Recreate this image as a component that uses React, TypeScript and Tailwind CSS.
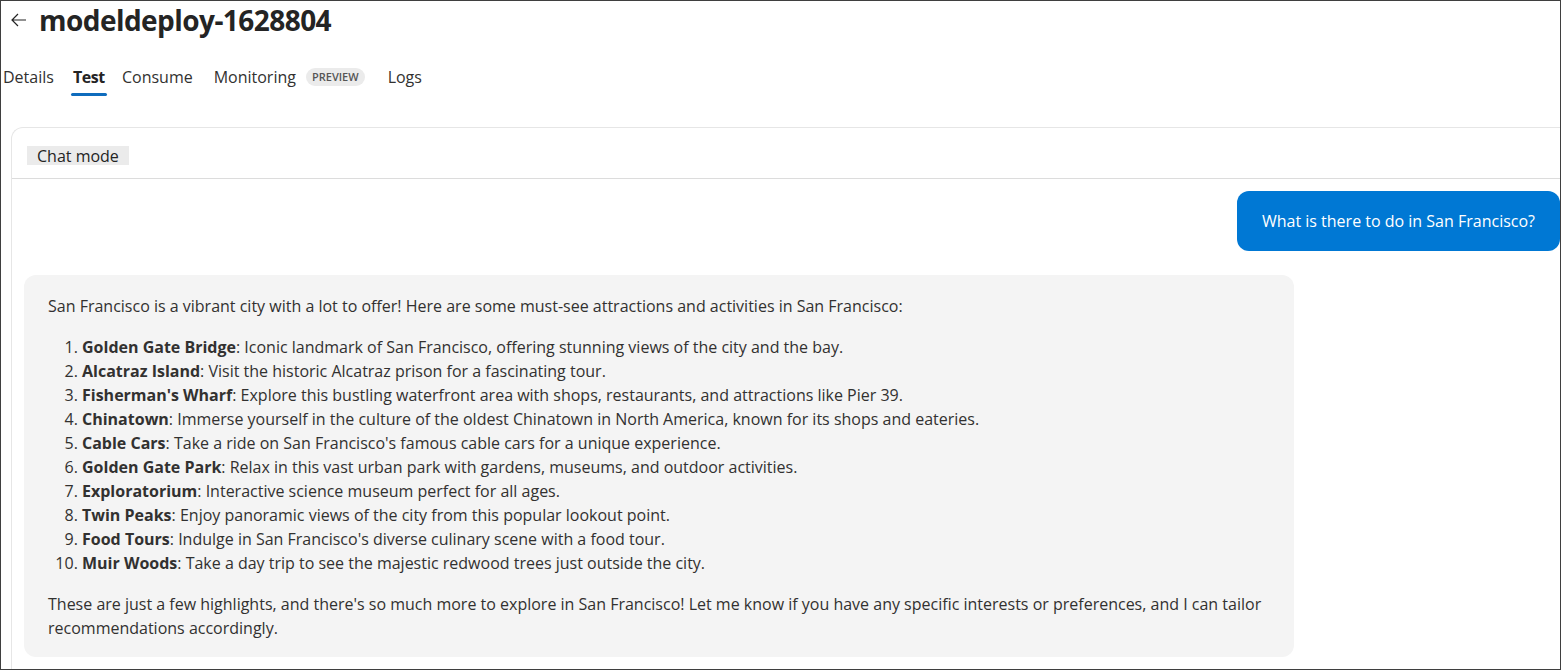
import React from "react";

const items: [string, string][] = [
  ["Golden Gate Bridge", "Iconic landmark of San Francisco, offering stunning views of the city and the bay."],
  ["Alcatraz Island", "Visit the historic Alcatraz prison for a fascinating tour."],
  ["Fisherman's Wharf", "Explore this bustling waterfront area with shops, restaurants, and attractions like Pier 39."],
  ["Chinatown", "Immerse yourself in the culture of the oldest Chinatown in North America, known for its shops and eateries."],
  ["Cable Cars", "Take a ride on San Francisco's famous cable cars for a unique experience."],
  ["Golden Gate Park", "Relax in this vast urban park with gardens, museums, and outdoor activities."],
  ["Exploratorium", "Interactive science museum perfect for all ages."],
  ["Twin Peaks", "Enjoy panoramic views of the city from this popular lookout point."],
  ["Food Tours", "Indulge in San Francisco's diverse culinary scene with a food tour."],
  ["Muir Woods", "Take a day trip to see the majestic redwood trees just outside the city."],
];

export default function App() {
  return (
    <div
      className="w-[1561px] h-[670px] border border-[#3f3f3f] bg-white overflow-hidden text-[#242424]"
      style={{ fontFamily: '"Open Sans", "Noto Sans", sans-serif' }}
    >
      <div className="flex items-center h-[38px] pl-[8px] gap-[10px]">
        <svg width="20" height="20" viewBox="0 0 20 20" fill="none" stroke="#242424" strokeWidth="1.2">
          <path d="M17 10H3.5M9 4L3 10l6 6" />
        </svg>
        <h1 className="text-[28px] font-bold leading-none tracking-[-0.55px]">modeldeploy-1628804</h1>
      </div>
      <div className="flex items-center h-[40px] pl-[2px] text-[16px] text-[#323130] mt-[18px]">
        <div className="h-full flex items-center">Details</div>
        <div className="h-full flex items-center relative ml-[19px] font-bold text-[#242424] tracking-[-0.4px]">
          Test
          <div className="absolute left-[-2px] right-[-2px] bottom-[1px] h-[3px] rounded bg-[#0f6cbd]" />
        </div>
        <div className="h-full flex items-center ml-[17px]">Consume</div>
        <div className="h-full flex items-center ml-[21px]">Monitoring</div>
        <div className="ml-[10px] px-[6px] h-[18px] flex items-center rounded-full bg-[#ebebeb] text-[11px] font-semibold text-[#555]">PREVIEW</div>
        <div className="h-full flex items-center ml-[23px]">Logs</div>
      </div>
      <div className="ml-[10px] mt-[30px] w-[1600px] border-l border-t border-[#e6e6e6] rounded-tl-[12px] h-[560px]">
        <div className="h-[51px] flex items-start pt-[18px] pl-[15px] border-b border-[#dcdcdc]">
          <div className="bg-[#ebebeb] px-[10px] h-[19px] flex items-center text-[16px]">Chat mode</div>
        </div>
        <div className="w-[1548px] pl-[12px]">
          <div className="flex justify-end mt-[12px]">
            <div className="bg-[#0078d4] text-white rounded-[12px] h-[60px] px-[25px] flex items-center text-[16px]">
              What is there to do in San Francisco?
            </div>
          </div>
          <div className="mt-[24px] w-[1270px] bg-[#f4f4f4] rounded-[12px] pl-[24px] pr-[20px] pt-[19px] pb-[17px] text-[16px] leading-[24px] text-[#323130]">
            <p>San Francisco is a vibrant city with a lot to offer! Here are some must-see attractions and activities in San Francisco:</p>
            <ol className="list-decimal pl-[34px] my-[17px]">
              {items.map(([b, t]) => (
                <li key={b}>
                  <b className="font-bold">{b}</b>: {t}
                </li>
              ))}
            </ol>
            <p>
              These are just a few highlights, and there's so much more to explore in San Francisco! Let me know if you have any specific interests or preferences, and I can tailor recommendations accordingly.
            </p>
          </div>
        </div>
      </div>
    </div>
  );
}
